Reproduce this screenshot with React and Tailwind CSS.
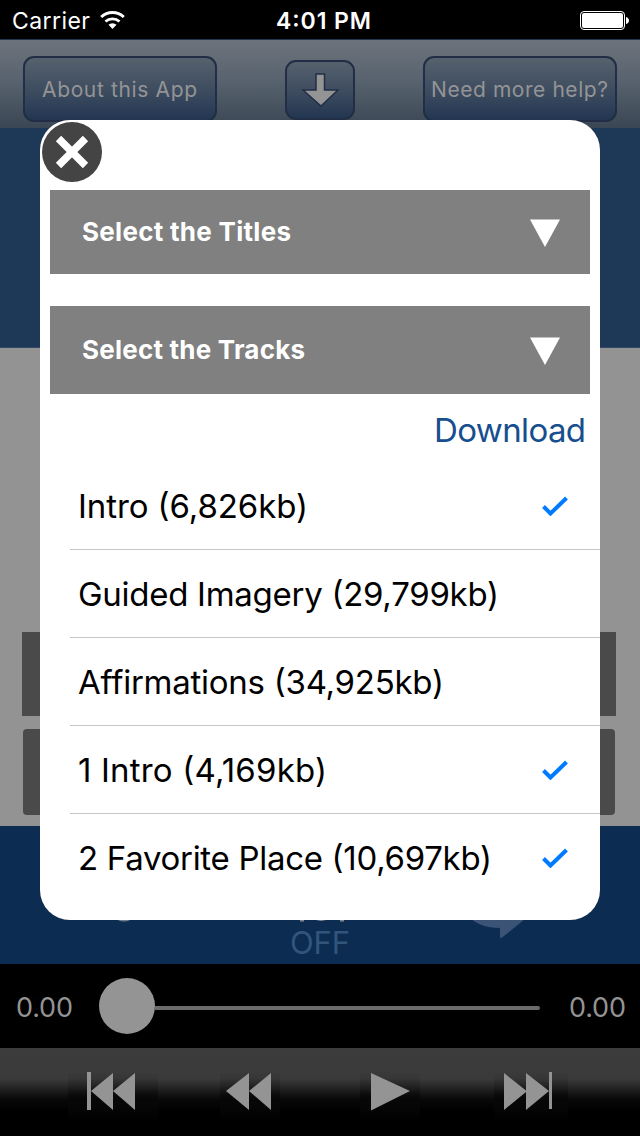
const tracks = [
  { name: "Intro (6,826kb)", width: 230, selected: true },
  { name: "Guided Imagery (29,799kb)", width: 421, selected: false },
  { name: "Affirmations (34,925kb)", width: 366, selected: false },
  { name: "1 Intro (4,169kb)", width: 249, selected: true },
  { name: "2 Favorite Place (10,697kb)", width: 414, selected: true },
];

// single line of text fitted to a given width
const Label = ({ width, size, className, children }) => (
  <svg
    width={width}
    height={size + 10}
    className={`block overflow-visible fill-current ${className || ""}`}
  >
    <text
      x="0"
      y={size}
      fontSize={size}
      textLength={width}
      lengthAdjust="spacing"
    >
      {children}
    </text>
  </svg>
);

const StatusBar = () => (
  <div className="h-[39px] bg-black text-white grid grid-cols-3 items-center pl-3 pr-[11px]">
    <div className="flex items-center gap-3 pt-[5px]">
      <Label width={78} size={23} className="mt-px">
        Carrier
      </Label>
      <svg width="25" height="18" viewBox="0 0 25 18" className="-ml-[2px] -mt-[5px] fill-none stroke-white">
        <path d="M1.200 6a16.500 16.500 0 0 1 22.600 0" strokeWidth="3" />
        <path d="M5.500 10.500a10.400 10.400 0 0 1 14 0" strokeWidth="2.800" />
        <path d="M12.500 18l-4-4.200a5.800 5.800 0 0 1 8 0z" className="fill-white stroke-none" />
      </svg>
    </div>
    <div className="flex justify-center pt-[6px] pl-[6px] font-semibold">
      <Label width={95} size={23}>
        4:01 PM
      </Label>
    </div>
    <svg width="49" height="19" viewBox="0 0 49 19" className="justify-self-end mt-[2px]">
      <rect x="0.5" y="0.5" width="44" height="18" rx="3.5" fill="none" stroke="white" />
      <rect x="2" y="2" width="41" height="15" rx="2" fill="white" />
      <path d="M46 6c4 1 4 6 0 7z" fill="white" />
    </svg>
  </div>
);

const Header = () => (
  <div className="h-[89px] border-t border-[#25364f] bg-[linear-gradient(#6d737c,#58636f_45%,#3a4653)] flex items-start justify-between px-[23px] pt-4 text-[#949495]">
    <div className="w-[194px] h-[66px] rounded-[11px] border-2 border-[#222e45] bg-[linear-gradient(#56616d,#3c4b5f_55%,#233652)] flex items-center justify-center pt-[5px]">
      <Label width={155} size={21} className="-ml-[2px]">
        About this App
      </Label>
    </div>
    <div className="mt-1 w-[70px] h-[60px] rounded-[11px] border-2 border-[#222e45] bg-[linear-gradient(#56616d,#3c4b5f_55%,#233652)] flex items-center justify-center">
      <svg width="38" height="34" viewBox="0 0 38 34">
        <path
          d="M15 1h8.500v16H37L20 33 2 17h13z"
          fill="#949495"
          stroke="#222e45"
          strokeWidth="1.5"
        />
      </svg>
    </div>
    <div className="w-[194px] h-[66px] rounded-[11px] border-2 border-[#222e45] bg-[linear-gradient(#56616d,#3c4b5f_55%,#233652)] flex items-center justify-center pt-[5px]">
      <Label width={177} size={21} className="-ml-[2px]">
        Need more help?
      </Label>
    </div>
  </div>
);

const Player = () => (
  <>
    <div className="h-[84px] bg-black text-[#949494] flex items-center pl-4 pr-[14px]">
      <Label width={57} size={27} className="mt-[5px]">
        0.00
      </Label>
      <div className="ml-[26px] w-[441px] h-14 flex items-center">
        <div className="size-14 rounded-full bg-[#949494] shrink-0"></div>
        <div className="h-1 grow mt-1 rounded-r-full bg-[#6b6b6b]"></div>
      </div>
      <Label width={57} size={27} className="ml-auto mt-[5px]">
        0.00
      </Label>
    </div>
    <div className="h-[88px] bg-[linear-gradient(#3c3c3c_0%,#3a3a3a_35%,#272727_44%,#090909_58%,#000_72%)] flex items-start pt-6 fill-[#949494]">
      <div className="ml-[68px] w-[90px] h-[50px] bg-[linear-gradient(transparent,#00000030_35%,#070707_60%,transparent)]">
        <svg width="90" height="39" viewBox="0 0 90 39">
          <path d="M19 0h4v38h-4zM23 19L45 1v37zM45 19L67 1v37z" />
        </svg>
      </div>
      <div className="ml-[62px] w-[60px] h-[50px] bg-[linear-gradient(transparent,#00000030_35%,#070707_60%,transparent)]">
        <svg width="60" height="39" viewBox="0 0 60 39">
          <path d="M6 19L29 1v37zM29 19L51 1v37z" />
        </svg>
      </div>
      <div className="ml-20 w-[60px] h-[50px] bg-[linear-gradient(transparent,#00000030_35%,#070707_60%,transparent)]">
        <svg width="60" height="39" viewBox="0 0 60 39">
          <path d="M11 1l39 18-39 19.500z" />
        </svg>
      </div>
      <div className="ml-[74px] w-[74px] h-[50px] bg-[linear-gradient(transparent,#00000030_35%,#070707_60%,transparent)]">
        <svg width="74" height="39" viewBox="0 0 74 39">
          <path d="M10 1l22 17.500V1l23 18-23 19V20L10 38zM55 0h3v37h-3z" />
        </svg>
      </div>
    </div>
  </>
);

const SelectBar = ({ title, width, className }) => (
  <div
    className={`mx-[10px] bg-[#808080] text-white font-bold flex items-center justify-between pt-[2px] pl-8 pr-[29px] ${className}`}
  >
    <Label width={width} size={26}>
      {title}
    </Label>
    <svg width="32" height="30" viewBox="0 0 32 30" className="fill-white">
      <path d="M1 1.500h30L16 29z" />
    </svg>
  </div>
);

const DownloadDialog = () => (
  <div className="absolute left-10 top-[120px] w-[560px] h-[800px] rounded-[30px] bg-white overflow-hidden flex flex-col">
    <div className="h-[70px] shrink-0 pl-[2px] pt-[2px]">
      <svg width="60" height="60" viewBox="0 0 60 60">
        <circle cx="30" cy="30" r="30" fill="#444444" />
        <path d="M16.500 16.500l27 27M43.500 16.500l-27 27" stroke="white" strokeWidth="7.500" />
      </svg>
    </div>
    <SelectBar title="Select the Titles" width={209} className="h-[84px]" />
    <SelectBar title="Select the Tracks" width={223} className="h-[88px] mt-8" />
    <div className="h-[68px] flex justify-end pr-[14px] pt-[15px] text-[#174e8e]">
      <Label width={152} size={33}>
        Download
      </Label>
    </div>
    {tracks.map((track, index) => (
      <div
        key={index}
        className="ml-[30px] h-[88px] pl-2 pr-8 border-b border-[#c8c7cc] last:border-transparent flex items-center justify-between text-black"
      >
        <Label width={track.width} size={33} className="mt-[2px]">
          {track.name}
        </Label>
        {track.selected && (
          <svg width="26" height="20" viewBox="0 0 26 20">
            <path d="M1.500 10.500l7 7L24.500 2" fill="none" stroke="#007aff" strokeWidth="4" />
          </svg>
        )}
      </div>
    ))}
  </div>
);

const App = () => {
  return (
    <div className="relative w-[640px] h-[1136px] overflow-hidden bg-[#939393] font-['Inter',sans-serif] flex flex-col">
      <StatusBar />
      <Header />
      <div className="h-[220px] bg-[#1e3857] border-b border-[#344a66]"></div>
      <div className="h-[478px] pt-[284px]">
        <div className="ml-[22px] w-[594px] h-[84px] bg-[#4a4a4a]"></div>
        <div className="ml-[23px] mt-[13px] w-[592px] h-[86px] rounded bg-[#4a4a4a]"></div>
      </div>
      <div className="relative h-[138px] bg-[#0c2d51]">
        <svg width="640" height="138" viewBox="0 0 640 138">
          <ellipse cx="124" cy="91" rx="8" ry="4.500" fill="#707d8c" />
          <path d="M300 88h4v7.500h-4zM340 88h4v7.500h-4z" fill="#81878d" />
          <path d="M315 92q6 3 12 0" stroke="#81878d" strokeWidth="3" fill="none" />
          <path d="M468 90q11 12 32 12v10q2 0 4-2l21-17z" fill="#3b5375" />
        </svg>
        <div className="absolute left-[290px] top-[97px] text-[#31557c]">
          <Label width={60} size={31}>
            OFF
          </Label>
        </div>
      </div>
      <Player />
      <DownloadDialog />
    </div>
  );
};

export default App;
